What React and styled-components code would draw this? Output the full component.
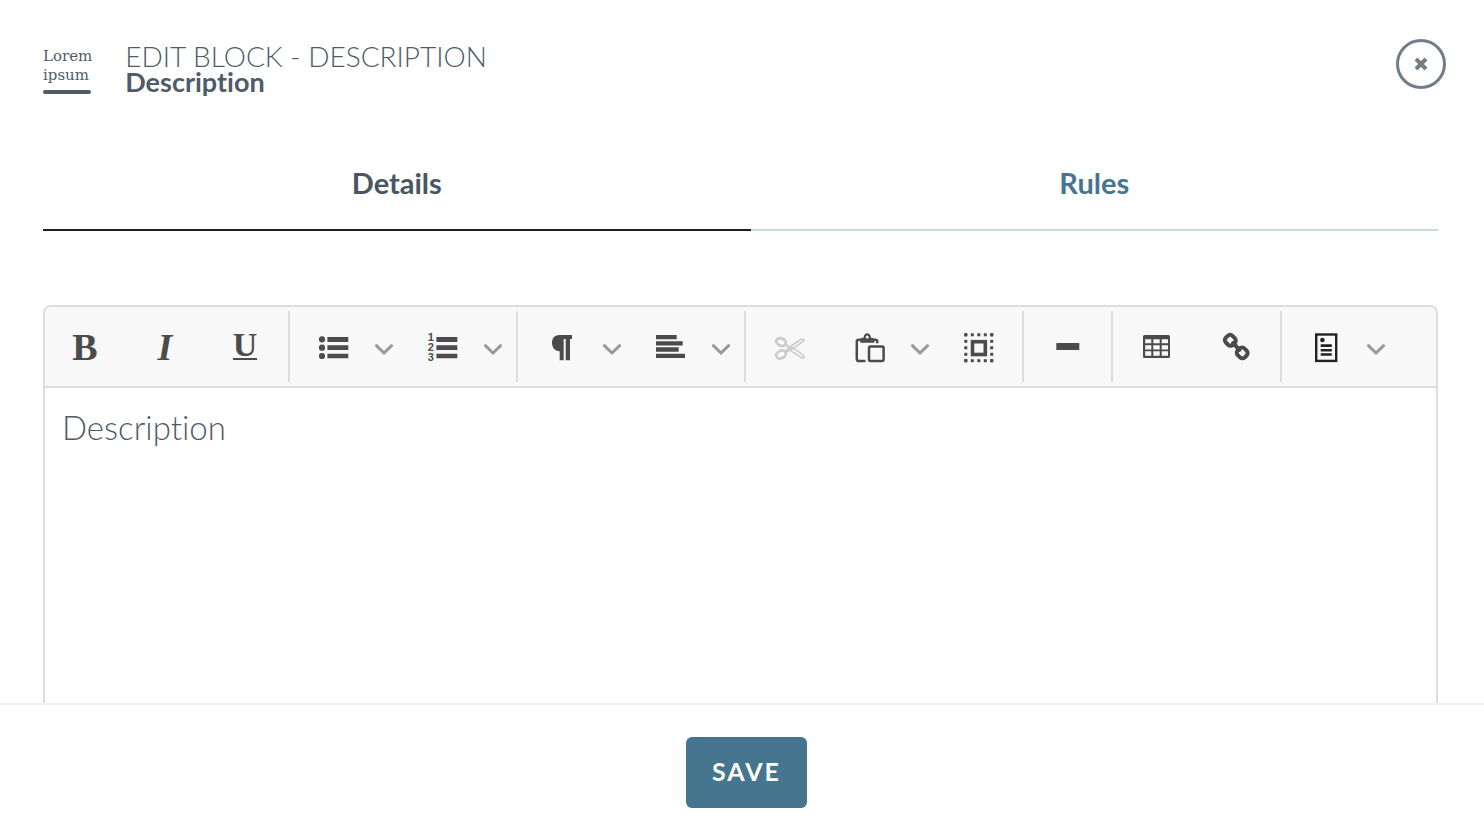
import { useState } from "react";
import styled, { createGlobalStyle } from "styled-components";

function Bold() {
  return <Letter>B</Letter>;
}

function Italic() {
  return <Letter $italic>I</Letter>;
}

function Underline() {
  return <UnderlinedLetter>U</UnderlinedLetter>;
}

function BulletList() {
  return (
    <Icon viewBox="0 0 32 32">
      <circle cx="4" cy="8.3" r="3.1" />
      <circle cx="4" cy="16.7" r="3.1" />
      <circle cx="4" cy="25" r="3.1" />
      <path d="M9.4 6H30.3V11H9.4zM9.4 14.3H30.3V19H9.4zM9.4 22.7H30.3V27.3H9.4z" />
    </Icon>
  );
}

function NumberedList() {
  return (
    <Icon viewBox="0 0 32 32">
      <Digit x="0.8" y="9.7">1</Digit>
      <Digit x="0.8" y="20">2</Digit>
      <Digit x="0.8" y="30.3">3</Digit>
      <path d="M9.4 6H30.3V11H9.4zM9.4 14.3H30.3V19H9.4zM9.4 22.7H30.3V27.3H9.4z" />
    </Icon>
  );
}

function Paragraph() {
  return (
    <Icon viewBox="0 0 32 32">
      <path d="M26 4H13.5C8.8 4 6 7 6 11.7S9 20 13.7 20.3V29.3H17.7V8H19.7V29.3H24V8H26z" />
    </Icon>
  );
}

function AlignLeft() {
  return (
    <Icon viewBox="0 0 32 32">
      <path d="M1 4H21.7V8.2H1zM1 10.3H27.7V14.5H1zM1 16.3H23.7V20.7H1zM1 22.7H30V27H1z" />
    </Icon>
  );
}

function Cut() {
  return (
    <Icon viewBox="0 0 32 32" $line>
      <g strokeWidth="2.8">
        <ellipse cx="7" cy="11" rx="5" ry="3.6" transform="rotate(22 7 11)" />
        <ellipse cx="7" cy="23.5" rx="5" ry="3.8" transform="rotate(-28 7 23.5)" />
      </g>
      <g strokeWidth="1.6">
        <path d="M11.5 13.5L15.5 16L27.5 8.2L30 8.6V9.8L18.5 17.7L11.5 21.5" />
        <path d="M11 20.5L15 17.8L13 16.5M18 15.8L30 24.8V26.6L27.8 27L15.5 18.8" />
        <circle cx="17" cy="17.2" r="0.7" />
      </g>
    </Icon>
  );
}

function Paste() {
  return (
    <Icon viewBox="0 0 32 32">
      <path
        d="M11.5 30H4.8Q2.8 30 2.8 28V10.6Q2.8 8.7 4.8 8.7H7M20 8.7H21.4Q23.2 8.7 23.2 10.5V12.3"
        fill="none"
        stroke="currentColor"
        strokeWidth="2.5"
      />
      <path
        fillRule="evenodd"
        d="M6.3 11.8V8.5Q6.3 6.8 8.5 6.8H9.5Q10 2.3 13.2 2.3T17 6.8H18Q20.3 6.8 20.3 8.5V11.8zM13.2 4.5A1.5 1.5 0 1 0 13.2 7.5A1.5 1.5 0 1 0 13.2 4.5z"
      />
      <rect x="15" y="15.6" width="14.6" height="14.3" rx="1.5" fill="none" stroke="currentColor" strokeWidth="2.5" />
    </Icon>
  );
}

function SelectAll() {
  const stops = [1.3, 7.8, 14.3, 20.8, 27.2];
  return (
    <Icon viewBox="0 0 32 32">
      {stops.map((s) => (
        <g key={s}>
          <rect x={s} y="2.3" width="3" height="3" />
          <rect x={s} y="28.2" width="3" height="3" />
          <rect x="1.3" y={s + 1} width="3" height="3" />
          <rect x="27.2" y={s + 1} width="3" height="3" />
        </g>
      ))}
      <rect x="9.5" y="10.7" width="12.8" height="12.8" fill="none" stroke="currentColor" strokeWidth="3.6" />
    </Icon>
  );
}

function Rule() {
  return (
    <Icon viewBox="0 0 32 32">
      <rect x="4.3" y="12" width="23" height="7" rx="0.6" />
    </Icon>
  );
}

function Table() {
  return (
    <Icon viewBox="0 0 32 32">
      <path
        fillRule="evenodd"
        d="M3.6 4H27.4Q29 4 29 5.6V25.5Q29 27 27.4 27H3.6Q2 27 2 25.5V5.6Q2 4 3.6 4zM4.2 8.2V12.3H10.3V8.2zM12.3 8.2V12.3H18.7V8.2zM20.7 8.2V12.3H27V8.2zM4.2 14.2V18.4H10.3V14.2zM12.3 14.2V18.4H18.7V14.2zM20.7 14.2V18.4H27V14.2zM4.2 20.3V24.8H10.3V20.3zM12.3 20.3V24.8H18.7V20.3zM20.7 20.3V24.8H27V20.3z"
      />
    </Icon>
  );
}

function Link() {
  return (
    <Icon viewBox="0 0 32 32" $line>
      <g strokeWidth="4" strokeLinecap="round">
        <rect x="4.3" y="4.6" width="10" height="9.4" rx="3.4" transform="rotate(45 9.3 9.3)" />
        <rect x="16.2" y="17.2" width="10" height="9.4" rx="3.4" transform="rotate(45 21.2 21.9)" />
        <path d="M12 12L18.5 18.8" />
      </g>
    </Icon>
  );
}

function Template() {
  return (
    <Icon viewBox="0 0 32 32" $line>
      <rect x="6.2" y="3.5" width="20" height="26.4" strokeWidth="2.4" />
      <circle cx="12.4" cy="9" r="2.3" fill="currentColor" stroke="none" />
      <path d="M10.7 14.6H21.8M10.7 19.2H21.8M10.7 23.5H21.8" strokeWidth="2.6" />
    </Icon>
  );
}

function Menu({ label }) {
  return (
    <MenuButton aria-label={label}>
      <Chevron viewBox="0 0 20 20">
        <path d="M2.4 8.7L10 16L17.6 8.7" />
      </Chevron>
    </MenuButton>
  );
}

const groups = [
  [
    { label: "Bold", icon: Bold },
    { label: "Italic", icon: Italic },
    { label: "Underline", icon: Underline },
  ],
  [
    { label: "Bullet list", icon: BulletList, menu: true },
    { label: "Numbered list", icon: NumberedList, menu: true },
  ],
  [
    { label: "Paragraph format", icon: Paragraph, menu: true },
    { label: "Align", icon: AlignLeft, menu: true },
  ],
  [
    { label: "Cut", icon: Cut, disabled: true },
    { label: "Paste", icon: Paste, menu: true },
    { label: "Select all", icon: SelectAll },
  ],
  [{ label: "Horizontal line", icon: Rule }],
  [
    { label: "Insert table", icon: Table },
    { label: "Insert link", icon: Link },
  ],
  [{ label: "Templates", icon: Template, menu: true, dark: true }],
];

function App() {
  const [tab, setTab] = useState("Details");

  return (
    <Page>
      <GlobalStyle />
      <Header>
        <BlockLogo>
          Lorem
          <br />
          ipsum
        </BlockLogo>
        <Titles>
          <Title>EDIT BLOCK - DESCRIPTION</Title>
          <Subtitle>Description</Subtitle>
        </Titles>
        <CloseButton aria-label="Close">
          <CloseIcon viewBox="0 0 14 14">
            <path d="M2 2L12 12M12 2L2 12" />
          </CloseIcon>
        </CloseButton>
      </Header>
      <Content>
        <Tabs role="tablist">
          {["Details", "Rules"].map((name) => (
            <Tab
              key={name}
              role="tab"
              aria-selected={tab === name}
              $active={tab === name}
              onClick={() => setTab(name)}
            >
              {name}
            </Tab>
          ))}
        </Tabs>
        <Editor>
          <Toolbar role="toolbar">
            {groups.map((group, i) => (
              <Group key={i} $menu={group[group.length - 1].menu}>
                {group.map(({ label, icon: ToolIcon, menu, disabled, dark }) => (
                  <Tool key={label}>
                    <ToolButton aria-label={label} disabled={disabled} $dark={dark}>
                      <ToolIcon />
                    </ToolButton>
                    {menu && <Menu label={label + " options"} />}
                  </Tool>
                ))}
              </Group>
            ))}
          </Toolbar>
          <TextArea aria-label="Description" defaultValue="Description" />
        </Editor>
      </Content>
      <Footer>
        <SaveButton>SAVE</SaveButton>
      </Footer>
    </Page>
  );
}

export default App;

const GlobalStyle = createGlobalStyle`
  * {
    box-sizing: border-box;
  }

  body {
    margin: 0;
    background: #ffffff;
    color: #4f5b69;
    font-family: "Lato", sans-serif;
    font-variant-ligatures: none;
  }

  button {
    border: none;
    padding: 0;
    background: none;
    font-family: inherit;
    cursor: pointer;
  }
`;

const Page = styled.div`
  height: 100vh;
  display: flex;
  flex-direction: column;
`;

const Header = styled.header`
  display: flex;
  align-items: flex-start;
  padding: 39px 38px 0 43px;
`;

const BlockLogo = styled.div`
  margin-top: 8px;
  font-family: "DejaVu Serif", serif;
  font-size: 15px;
  line-height: 19px;

  &::after {
    content: "";
    display: block;
    width: 48px;
    height: 4px;
    margin-top: 5px;
    border-radius: 2px;
    background: #4f5b69;
  }
`;

const Titles = styled.div`
  flex: 1;
  margin-top: 4px;
  padding-left: 33px;
`;

const Title = styled.h1`
  margin: 0;
  font-size: 28px;
  font-weight: 300;
  line-height: 26px;
`;

const Subtitle = styled.h2`
  margin: 0;
  font-size: 27px;
  font-weight: 700;
  line-height: 26px;
`;

const CloseButton = styled.button`
  width: 50px;
  height: 50px;
  display: flex;
  align-items: center;
  justify-content: center;
  border: 3px solid #727d88;
  border-radius: 50%;
`;

const CloseIcon = styled.svg`
  width: 14px;
  height: 14px;
  stroke: #727d88;
  stroke-width: 4;
`;

const Content = styled.main`
  flex: 1;
  min-height: 0;
  padding: 44px 46px 0 43px;
  overflow-y: auto;
  scrollbar-width: none;
`;

const Tabs = styled.div`
  display: flex;
`;

const Tab = styled.button`
  flex: 1 1 auto;
  height: 92px;
  padding-bottom: 4px;
  border-bottom: 2px solid ${({ $active }) => ($active ? "#1d1f22" : "#c5dcd8")};
  color: ${({ $active }) => ($active ? "#4a5563" : "#46758f")};
  font-size: 29px;
  font-weight: 700;
`;

const Editor = styled.section`
  margin-top: 74px;
  border: 2px solid #dddddd;
  border-radius: 8px;
  overflow: hidden;
`;

const Toolbar = styled.div`
  display: flex;
  padding: 4px 0;
  border-bottom: 2px solid #dddddd;
  background: #f8f8f8;
`;

const Group = styled.div`
  height: 71px;
  display: flex;
  padding-left: 4px;
  padding-right: ${({ $menu }) => ($menu ? 4 : 3)}px;
  border-right: 2px solid #dddddd;

  &:first-child {
    padding-left: 0;
  }

  &:last-child {
    border-right: none;
  }
`;

const Tool = styled.div`
  display: flex;
`;

const ToolButton = styled.button`
  width: 80px;
  display: flex;
  align-items: center;
  justify-content: center;
  color: ${({ $dark }) => ($dark ? "#222222" : "#4b4b4b")};

  &:disabled {
    color: #cccccc;
  }
`;

const MenuButton = styled.button`
  width: 29px;
  display: flex;
  align-items: center;
`;

const Icon = styled.svg`
  width: 32px;
  height: 32px;
  fill: ${({ $line }) => ($line ? "none" : "currentColor")};
  stroke: ${({ $line }) => ($line ? "currentColor" : "none")};
`;

const Digit = styled.text`
  font-family: "Liberation Sans", sans-serif;
  font-size: 11px;
  font-weight: 700;
`;

const Chevron = styled.svg`
  width: 20px;
  height: 20px;
  fill: none;
  stroke: #999999;
  stroke-width: 3;
  stroke-linecap: round;
`;

const Letter = styled.span`
  font-family: "Liberation Serif", serif;
  font-size: 38px;
  font-weight: 700;
  font-style: ${({ $italic }) => ($italic ? "italic" : "normal")};
  line-height: 38px;
`;

const UnderlinedLetter = styled.span`
  height: 26px;
  border-bottom: 2px solid currentColor;
  font-family: "Liberation Serif", serif;
  font-size: 34px;
  font-weight: 700;
  line-height: 22px;
`;

const TextArea = styled.textarea`
  display: block;
  width: 100%;
  height: 480px;
  padding: 19px 17px;
  border: none;
  outline: none;
  resize: none;
  background: #ffffff;
  color: #4f5b69;
  font-family: inherit;
  font-size: 33px;
  font-weight: 300;
  font-variant-ligatures: none;
  line-height: 40px;
`;

const Footer = styled.footer`
  display: flex;
  justify-content: center;
  padding: 32px 0 22px 9px;
  border-top: 2px solid #f0f0f0;
`;

const SaveButton = styled.button`
  height: 71px;
  padding: 0 26px 3px;
  border-radius: 6px;
  background: #46758f;
  color: #ffffff;
  font-size: 25px;
  font-weight: 700;
  letter-spacing: 2px;
`;
